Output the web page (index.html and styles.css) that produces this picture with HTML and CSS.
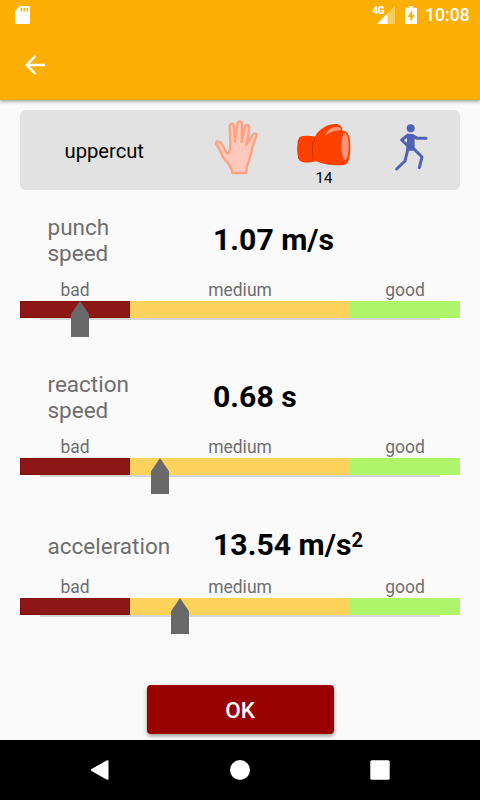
FILE: index.html
```html
<!DOCTYPE html>
<html lang="en">
<head>
  <meta charset="UTF-8" />
  <meta name="viewport" content="width=device-width, initial-scale=1.0"/>
  <title>uppercut</title>
  <link rel="stylesheet" href="styles.css">
</head>
<body>
  <header class="app-header">
    <div class="status-bar">
      <svg class="sd" width="15" height="18" viewBox="0 0 15 18"><path fill="#fff" fill-rule="evenodd" d="M5 0h8.5Q15 0 15 1.5v15Q15 18 13.500 18h-12Q0 18 0 16.500V5zM5.500 2v3.500h1.700V2zM8.500 2v3.500h1.700V2zM11.500 2v3.500h1.500V2z"/></svg>
      <div class="network">
        <span>4G</span>
        <svg width="18" height="18" viewBox="0 0 18 18"><path fill="#fff" fill-opacity=".35" d="M0 18L18 0v18z"/><path fill="#fff" d="M0 18L10.500 7.500V18z"/></svg>
      </div>
      <svg class="battery" width="12" height="18" viewBox="0 0 12 18"><path fill="#fff" fill-rule="evenodd" d="M4 0h4v1.800h3q1 0 1 1V17q0 1-1 1H1q-1 0-1-1V2.800q0-1 1-1h3zM7.500 4L2.500 11h2.800v5l4.500-7H7z"/></svg>
      <span class="clock">10:08</span>
    </div>
    <div class="toolbar">
      <svg width="20" height="20" viewBox="0 0 20 20"><path fill="none" stroke="#fff" stroke-width="2.500" d="M20 10H2M10.500 1L1.700 10l8.800 9"/></svg>
    </div>
  </header>

  <main class="content">
    <div class="summary">
      <span class="move">uppercut</span>
      <svg class="hand" width="80" height="80" viewBox="0 0 240 240">
        <path fill="#ffcabb" stroke="#ffa184" stroke-width="7" stroke-linejoin="round" d="M97 189C96 170 85 160 74 149C63 137 61 117 49 103C45 93 55 91 63 99C74 110 75 127 83 131C91 127 91 112 91 96L89 51C89 38 100 37 102 49L105 94L112 44C113 31 126 31 126 44L125 97L134 52C137 41 149 43 148 55L139 105L157 76C163 66 173 70 169 79L156 115C155 142 139 159 139 189Z"/>
      </svg>
      <div class="glove">
        <svg width="80" height="60" viewBox="0 0 240 180">
          <path fill="#ff4100" d="M40 92Q40 79 54 78Q70 75 92 80V154Q68 161 50 155Q40 152 39 140Q36 116 40 92Z"/>
          <path fill="none" stroke="#d93800" stroke-width="3" d="M40 90Q36 118 41 146"/>
          <path fill="#ff4100" d="M91 78C104 53 137 39 159 43Q171 47 173 62Q192 62 195 89C198 125 196 163 176 165C146 168 112 164 87 151C77 137 78 94 91 78Z"/>
          <path fill="none" stroke="#c53200" stroke-width="3" d="M90 84Q77 111 85 149"/>
          <path fill="#ff947a" d="M120 77Q131 50 157 51Q166 51 170 60Q143 61 120 77Z"/>
          <ellipse cx="180" cy="109" rx="11" ry="41" fill="#ff947a"/>
        </svg>
        <span>14</span>
      </div>
      <svg class="fighter" width="80" height="80" viewBox="0 0 240 240">
        <g fill="none" stroke="#5062b3" stroke-width="9" stroke-linecap="round" stroke-linejoin="round">
          <path d="M84 75L65 90L82 106M98 77L112 85H138M84 116L75 153L50 177M99 114L126 141L118 173"/>
        </g>
        <path fill="#5062b3" d="M80 75Q91 67 104 76V122H79V103Q83 91 80 75Z"/>
        <circle cx="92" cy="55" r="12" fill="#5062b3"/>
      </svg>
    </div>

    <section class="metric">
      <div class="metric-head">
        <span class="name">punch<br>speed</span>
        <span class="value">1.07 m/s</span>
      </div>
      <div class="labels"><span>bad</span><span>medium</span><span>good</span></div>
      <div class="gauge">
        <div class="scale"><i class="bad"></i><i class="medium"></i><i class="good"></i></div>
        <div class="track"></div>
        <div class="pointer" style="left: 51px"></div>
      </div>
    </section>

    <section class="metric">
      <div class="metric-head">
        <span class="name">reaction<br>speed</span>
        <span class="value">0.68 s</span>
      </div>
      <div class="labels"><span>bad</span><span>medium</span><span>good</span></div>
      <div class="gauge">
        <div class="scale"><i class="bad"></i><i class="medium"></i><i class="good"></i></div>
        <div class="track"></div>
        <div class="pointer" style="left: 131px"></div>
      </div>
    </section>

    <section class="metric">
      <div class="metric-head">
        <span class="name">acceleration</span>
        <span class="value">13.54 m/s<sup>2</sup></span>
      </div>
      <div class="labels"><span>bad</span><span>medium</span><span>good</span></div>
      <div class="gauge">
        <div class="scale"><i class="bad"></i><i class="medium"></i><i class="good"></i></div>
        <div class="track"></div>
        <div class="pointer" style="left: 151px"></div>
      </div>
    </section>

    <button class="ok">OK</button>
  </main>

  <nav class="nav-bar">
    <svg width="20" height="22" viewBox="0 0 20 22"><path fill="#fff" d="M1.500 10L17 1.300Q18.500 .7 18.500 2.300V19.700Q18.500 21.300 17 20.700L1.500 12Q.2 11 1.500 10z"/></svg>
    <svg width="20" height="20" viewBox="0 0 20 20"><circle cx="10" cy="10" r="10" fill="#fff"/></svg>
    <svg width="20" height="20" viewBox="0 0 20 20"><rect x=".3" y=".3" width="19.400" height="19.400" rx="1.500" fill="#fff"/></svg>
  </nav>
</body>
</html>
```

FILE: styles.css
```css
* { box-sizing: border-box; }
body {
  margin: 0;
  width: 480px;
  height: 800px;
  display: flex;
  flex-direction: column;
  background: #fafafa;
  font-family: Roboto, "Liberation Sans", sans-serif;
  overflow: hidden;
}
svg { display: block; flex: none; }
.app-header {
  height: 100px;
  flex: none;
  background: #fcb005;
  box-shadow: 0 1px 4px rgba(0,0,0,0.45);
}
.status-bar {
  height: 30px;
  padding: 0 10px 0 15px;
  display: flex;
  align-items: center;
  color: #fff;
}
.network {
  display: flex;
  align-items: flex-start;
  margin-left: auto;
}
.network span {
  font-size: 10px;
  line-height: 10px;
  font-weight: bold;
  letter-spacing: -0.5px;
  margin-right: -7px;
}
.battery { margin: 0 8px 0 10px; }
.clock {
  width: 45px;
  font-size: 17.6px;
  font-weight: 500;
  line-height: 33px;
  white-space: nowrap;
}
.toolbar {
  height: 70px;
  padding-left: 25px;
  display: flex;
  align-items: center;
}
.content {
  height: 640px;
  flex: none;
  padding: 10px 20px 0;
  display: flex;
  flex-direction: column;
}
.summary {
  height: 80px;
  margin-bottom: 23px;
  display: flex;
  background: #e2e2e2;
  border-radius: 6px;
}
.move {
  width: 180px;
  padding-left: 44.5px;
  font-size: 20.2px;
  line-height: 82px;
}
.glove {
  margin: 0 15px 0 5px;
  text-align: center;
  font-size: 15px;
}
.glove span {
  display: block;
  line-height: 16px;
  padding-right: 2px;
}
.metric { margin-bottom: 33px; }
.metric-head {
  min-height: 36px;
  display: flex;
  align-items: center;
}
.name {
  width: 193px;
  padding: 1px 0 0 27.5px;
  color: #6e6e6e;
  font-size: 22.5px;
  line-height: 26px;
}
.value {
  padding-bottom: 1px;
  font-size: 30.2px;
  line-height: 35px;
  font-weight: bold;
}
.value sup {
  font-size: 20px;
  line-height: 0;
  vertical-align: 8px;
}
.labels {
  display: grid;
  grid-template-columns: 1fr 2fr 1fr;
  margin-top: 14px;
  text-align: center;
  color: #6e6e6e;
  font-size: 17.5px;
  line-height: 21px;
}
.gauge {
  height: 36px;
  position: relative;
}
.scale {
  height: 17px;
  display: grid;
  grid-template-columns: 1fr 2fr 1fr;
}
.bad { background: #8b1717; border: 1px solid #800b0b; }
.medium { background: #ffd35b; }
.good { background: #aff56c; }
.track {
  height: 2px;
  margin: 0 20px;
  background: #d5d5d5;
}
.pointer {
  position: absolute;
  top: 0;
  width: 18px;
  height: 36px;
  background: #696969;
  clip-path: polygon(50% 0, 100% 37%, 100% 100%, 0 100%, 0 37%);
}
.ok {
  width: 187px;
  height: 49px;
  margin: auto auto 6px;
  padding: 1px 0 0;
  border: none;
  border-radius: 4px;
  background: #990000;
  color: #fff;
  font-family: inherit;
  font-size: 22.5px;
  font-weight: 500;
  box-shadow: 0 2px 4px rgba(0,0,0,0.4);
}
.nav-bar {
  height: 60px;
  flex: none;
  padding: 0 90px;
  display: flex;
  align-items: center;
  justify-content: space-between;
  background: #000;
}
```
